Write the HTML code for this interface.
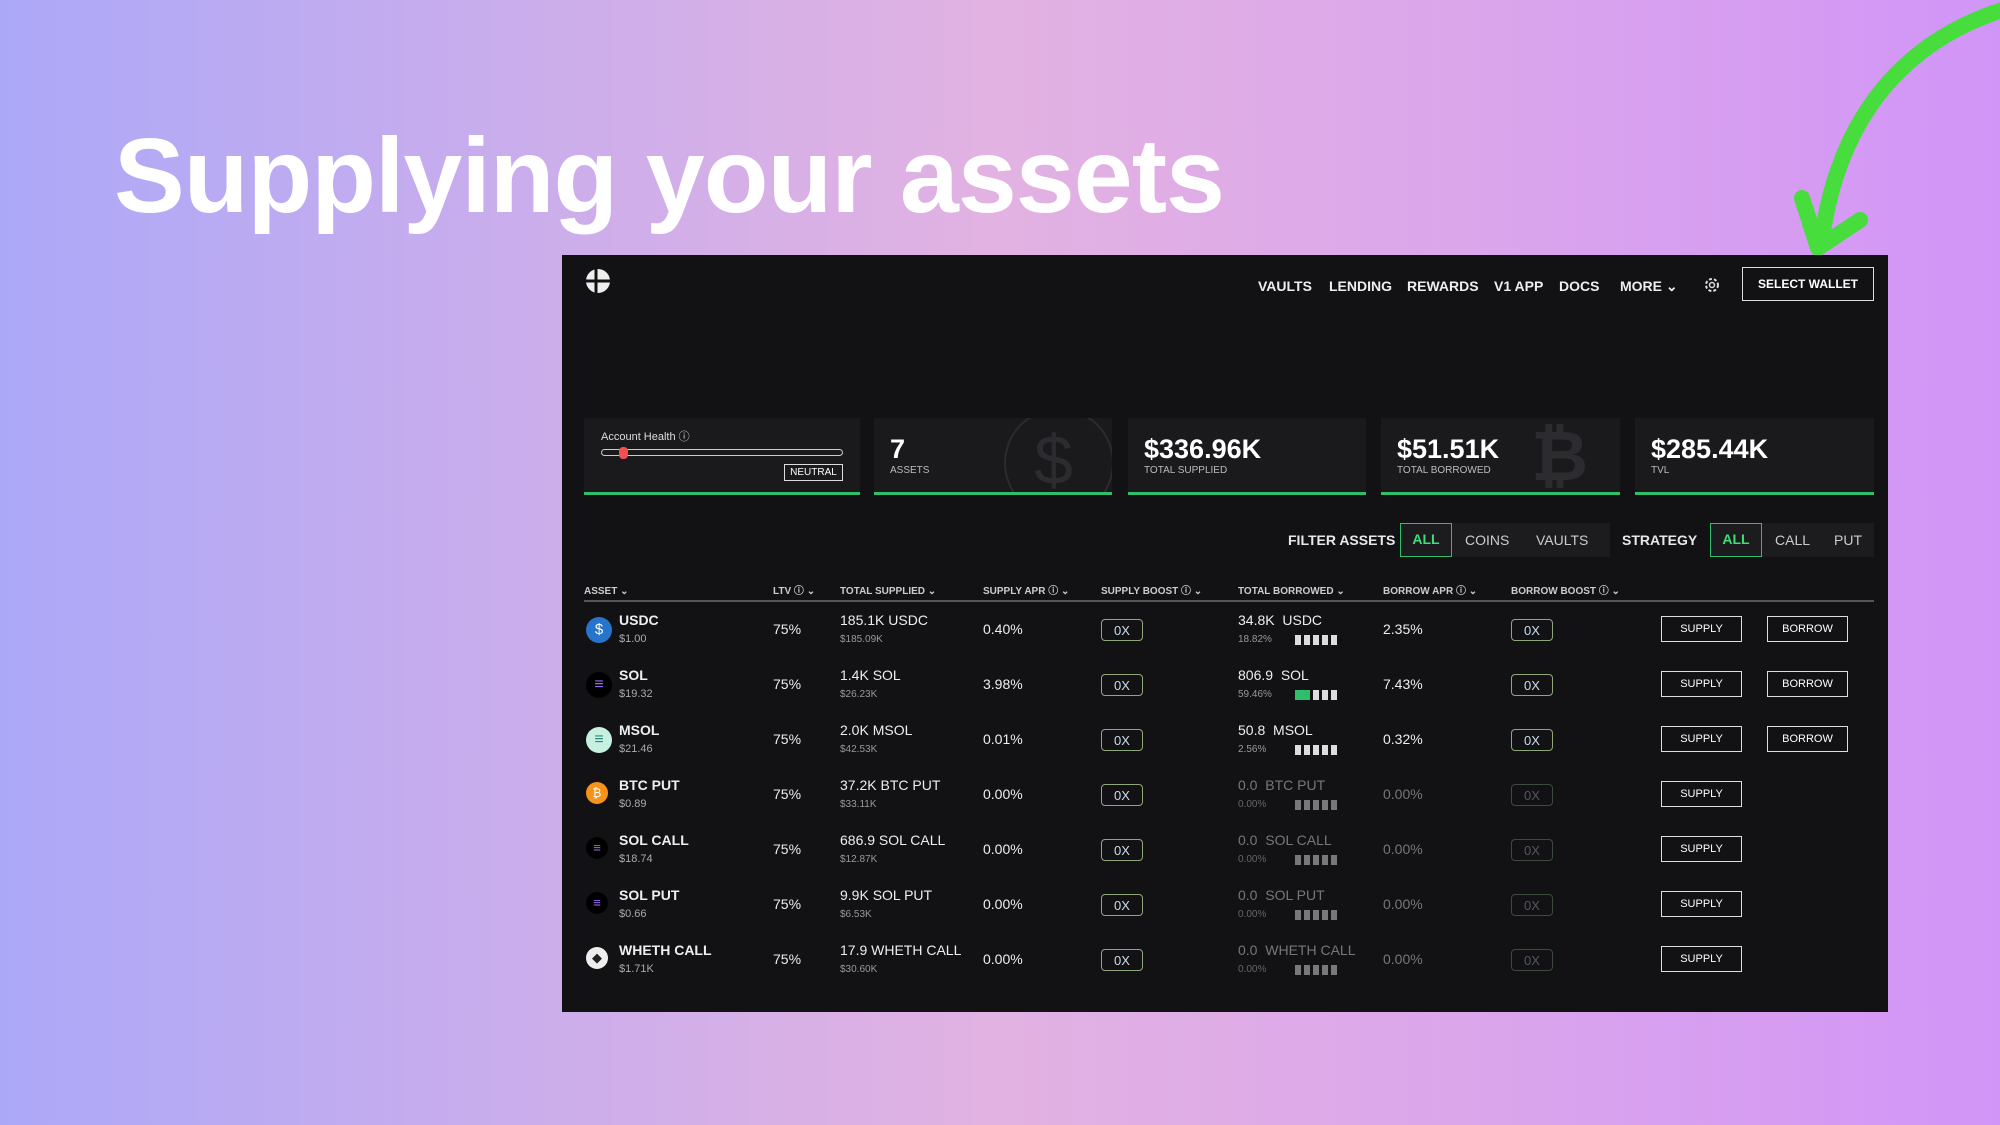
<!DOCTYPE html>
<html><head><meta charset="utf-8"><style>
*{margin:0;padding:0;box-sizing:border-box}
body{width:2000px;height:1125px;overflow:hidden;position:relative;font-family:"Liberation Sans",sans-serif;
background:linear-gradient(90deg,#aca8f8 0%,#c9adec 25%,#e2b2e2 50%,#dba5ec 75%,#d195f7 100%);}
.t{position:absolute;white-space:nowrap}
h1{position:absolute;left:114px;top:116px;font-size:106px;font-weight:bold;color:#fff;letter-spacing:-1px;white-space:nowrap}
#p{position:absolute;left:562px;top:255px;width:1326px;height:757px;background:#121214;color:#e8e8e8}
.nav{font-size:14px;font-weight:bold;top:23px;color:#eee}
.btn{position:absolute;border:1.5px solid #ddd;font-size:11px;color:#fff;display:flex;align-items:center;justify-content:center}
.card{position:absolute;top:163px;height:77px;background:#1a1a1c;border-bottom:3px solid #2fbf6a;overflow:hidden}
.big{position:absolute;left:16px;top:16px;font-size:27px;font-weight:bold;color:#fff}
.lbl{position:absolute;left:16px;top:47px;font-size:10px;color:#bbb}
.hd{font-size:10px;color:#ccc;font-weight:bold;top:331px;line-height:12px;height:12px}
.r{position:absolute;left:0;width:1326px;height:55px}
.r .t{color:#eee}
.nm{left:57px;top:10px;font-size:14px;font-weight:bold}
.pr{left:57px;top:31px;font-size:11px;color:#aaa!important}
.ic{position:absolute;left:24px;top:15px;width:26px;height:26px;border-radius:50%}
.v{font-size:14px;top:19px}
.s1{font-size:14px;top:10px}
.s2{font-size:10px;top:32px;color:#999!important}
.bx{position:absolute;top:17px;width:42px;height:22px;border:1.5px solid #8fa87a;border-radius:4px;font-size:13px;color:#cde;display:flex;align-items:center;justify-content:center}
.dim .bx2{border-color:#3d4a3e;color:#556}
.bars{position:absolute;left:733px;top:33px;width:42px;height:10px;background:repeating-linear-gradient(90deg,#ddd 0 6px,transparent 6px 9px)}
.dim .bo{color:#777!important}
.sb{top:14px;width:81px;height:26px;left:1099px}
.bb{top:14px;width:81px;height:26px;left:1205px}
</style></head><body>
<h1>Supplying your assets</h1>
<svg style="position:absolute;left:1780px;top:0" width="220" height="260"><path d="M222,10 C130,40 60,110 42,238" fill="none" stroke="#47dd3c" stroke-width="16" stroke-linecap="round"/><path d="M22,198 L38,248 L80,220" fill="none" stroke="#47dd3c" stroke-width="16" stroke-linecap="round" stroke-linejoin="round"/></svg>
<div id="p">
<svg style="position:absolute;left:23px;top:13px" width="26" height="26" viewBox="0 0 26 26"><circle cx="13" cy="13" r="12" fill="#eee"/><path d="M1,13H25M11,1V25" stroke="#121214" stroke-width="3"/></svg>
<div class="t nav" style="left:696px">VAULTS</div>
<div class="t nav" style="left:767px">LENDING</div>
<div class="t nav" style="left:845px">REWARDS</div>
<div class="t nav" style="left:932px">V1 APP</div>
<div class="t nav" style="left:997px">DOCS</div>
<div class="t nav" style="left:1058px">MORE ⌄</div>
<svg style="position:absolute;left:1141px;top:21px" width="18" height="18" viewBox="0 0 18 18"><circle cx="9" cy="9" r="6" fill="none" stroke="#ddd" stroke-width="2" stroke-dasharray="3 2"/><circle cx="9" cy="9" r="2.5" fill="none" stroke="#ddd" stroke-width="1.5"/></svg>
<div class="btn" style="left:1180px;top:12px;width:132px;height:34px;font-size:12px;font-weight:bold">SELECT WALLET</div>

<div class="card" style="left:22px;width:276px">
<div class="t" style="left:17px;top:10px;font-size:11px;color:#ddd">Account Health ⓘ</div>
<div style="position:absolute;left:17px;top:31px;width:242px;height:7px;border:1.5px solid #ccc;border-radius:4px"></div>
<div style="position:absolute;left:35px;top:29px;width:9px;height:12px;background:#f05050;border-radius:4px"></div>
<div class="btn" style="left:200px;top:46px;width:59px;height:17px;font-size:10px">NEUTRAL</div>
</div>
<div class="card" style="left:312px;width:238px"><div class="big">7</div><div class="lbl">ASSETS</div><div style="position:absolute;left:130px;top:-10px;width:110px;height:110px;border:2px solid #2c2c30;border-radius:50%"></div><div class="t" style="left:160px;top:2px;font-size:70px;color:#2c2c30">$</div></div>
<div class="card" style="left:566px;width:238px"><div class="big">$336.96K</div><div class="lbl">TOTAL SUPPLIED</div></div>
<div class="card" style="left:819px;width:239px"><div class="big">$51.51K</div><div class="lbl">TOTAL BORROWED</div><div class="t" style="left:150px;top:-2px;font-size:70px;color:#2c2c30;font-weight:bold">₿</div></div>
<div class="card" style="left:1073px;width:239px"><div class="big">$285.44K</div><div class="lbl">TVL</div></div>

<div class="t" style="left:726px;top:277px;font-size:14px;font-weight:bold">FILTER ASSETS</div>
<div style="position:absolute;left:838px;top:268px;width:210px;height:34px;background:#1c1c1f"></div>
<div class="t" style="left:838px;top:268px;width:52px;height:34px;border:1.5px solid #2fbf6a;color:#3fdc7a;font-size:14px;font-weight:bold;text-align:center;line-height:31px">ALL</div>
<div class="t" style="left:903px;top:277px;font-size:14px;color:#ccc">COINS</div>
<div class="t" style="left:974px;top:277px;font-size:14px;color:#ccc">VAULTS</div>
<div class="t" style="left:1060px;top:277px;font-size:14px;font-weight:bold">STRATEGY</div>
<div style="position:absolute;left:1148px;top:268px;width:164px;height:34px;background:#1c1c1f"></div>
<div class="t" style="left:1148px;top:268px;width:52px;height:34px;border:1.5px solid #2fbf6a;color:#3fdc7a;font-size:14px;font-weight:bold;text-align:center;line-height:31px">ALL</div>
<div class="t" style="left:1213px;top:277px;font-size:14px;color:#ccc">CALL</div>
<div class="t" style="left:1272px;top:277px;font-size:14px;color:#ccc">PUT</div>

<div class="t hd" style="left:22px">ASSET ⌄</div>
<div class="t hd" style="left:211px">LTV ⓘ ⌄</div>
<div class="t hd" style="left:278px">TOTAL SUPPLIED ⌄</div>
<div class="t hd" style="left:421px">SUPPLY APR ⓘ ⌄</div>
<div class="t hd" style="left:539px">SUPPLY BOOST ⓘ ⌄</div>
<div class="t hd" style="left:676px">TOTAL BORROWED ⌄</div>
<div class="t hd" style="left:821px">BORROW APR ⓘ ⌄</div>
<div class="t hd" style="left:949px">BORROW BOOST ⓘ ⌄</div>
<div style="position:absolute;left:22px;top:345px;width:1290px;height:2px;background:#555"></div>

<div class="r" style="top:347px"><div class="ic" style="background:#2775ca;color:#fff;font-size:15px;text-align:center;line-height:26px">$</div><div class="t nm">USDC</div><div class="t pr">$1.00</div><div class="t v" style="left:211px">75%</div><div class="t s1" style="left:278px">185.1K USDC</div><div class="t s2" style="left:278px">$185.09K</div><div class="t v" style="left:421px">0.40%</div><div class="bx" style="left:539px">0X</div><div class="t s1" style="left:676px">34.8K &nbsp;USDC</div><div class="t s2" style="left:676px">18.82%</div><div class="bars"></div><div class="t v" style="left:821px">2.35%</div><div class="bx bx2" style="left:949px">0X</div><div class="btn sb">SUPPLY</div><div class="btn bb">BORROW</div></div>
<div class="r" style="top:402px"><div class="ic" style="background:#000;color:#9b6cf0;font-size:16px;text-align:center;line-height:26px">≡</div><div class="t nm">SOL</div><div class="t pr">$19.32</div><div class="t v" style="left:211px">75%</div><div class="t s1" style="left:278px">1.4K SOL</div><div class="t s2" style="left:278px">$26.23K</div><div class="t v" style="left:421px">3.98%</div><div class="bx" style="left:539px">0X</div><div class="t s1" style="left:676px">806.9 &nbsp;SOL</div><div class="t s2" style="left:676px">59.46%</div><div class="bars" style="background:linear-gradient(90deg,#2fbf6a 0 15px,transparent 15px),repeating-linear-gradient(90deg,#ddd 0 6px,transparent 6px 9px)"></div><div class="t v" style="left:821px">7.43%</div><div class="bx bx2" style="left:949px">0X</div><div class="btn sb">SUPPLY</div><div class="btn bb">BORROW</div></div>
<div class="r" style="top:457px"><div class="ic" style="background:#c7f0e0;color:#2a8a7a;font-size:16px;text-align:center;line-height:26px">≡</div><div class="t nm">MSOL</div><div class="t pr">$21.46</div><div class="t v" style="left:211px">75%</div><div class="t s1" style="left:278px">2.0K MSOL</div><div class="t s2" style="left:278px">$42.53K</div><div class="t v" style="left:421px">0.01%</div><div class="bx" style="left:539px">0X</div><div class="t s1" style="left:676px">50.8 &nbsp;MSOL</div><div class="t s2" style="left:676px">2.56%</div><div class="bars"></div><div class="t v" style="left:821px">0.32%</div><div class="bx bx2" style="left:949px">0X</div><div class="btn sb">SUPPLY</div><div class="btn bb">BORROW</div></div>
<div class="r dim" style="top:512px"><div class="ic" style="background:#f7931a;width:22px;height:22px;color:#fff;font-size:12px;text-align:center;line-height:22px">₿</div><div class="t nm">BTC PUT</div><div class="t pr">$0.89</div><div class="t v" style="left:211px">75%</div><div class="t s1" style="left:278px">37.2K BTC PUT</div><div class="t s2" style="left:278px">$33.11K</div><div class="t v" style="left:421px">0.00%</div><div class="bx" style="left:539px">0X</div><div class="t s1 bo" style="left:676px">0.0 &nbsp;BTC PUT</div><div class="t s2" style="left:676px;color:#666!important">0.00%</div><div class="bars" style="opacity:.5"></div><div class="t v bo" style="left:821px">0.00%</div><div class="bx bx2" style="left:949px">0X</div><div class="btn sb">SUPPLY</div></div>
<div class="r dim" style="top:567px"><div class="ic" style="background:#000;width:22px;height:22px;color:#9b6cf0;font-size:13px;text-align:center;line-height:22px">≡</div><div class="t nm">SOL CALL</div><div class="t pr">$18.74</div><div class="t v" style="left:211px">75%</div><div class="t s1" style="left:278px">686.9 SOL CALL</div><div class="t s2" style="left:278px">$12.87K</div><div class="t v" style="left:421px">0.00%</div><div class="bx" style="left:539px">0X</div><div class="t s1 bo" style="left:676px">0.0 &nbsp;SOL CALL</div><div class="t s2" style="left:676px;color:#666!important">0.00%</div><div class="bars" style="opacity:.5"></div><div class="t v bo" style="left:821px">0.00%</div><div class="bx bx2" style="left:949px">0X</div><div class="btn sb">SUPPLY</div></div>
<div class="r dim" style="top:622px"><div class="ic" style="background:#000;width:22px;height:22px;color:#9b6cf0;font-size:13px;text-align:center;line-height:22px">≡</div><div class="t nm">SOL PUT</div><div class="t pr">$0.66</div><div class="t v" style="left:211px">75%</div><div class="t s1" style="left:278px">9.9K SOL PUT</div><div class="t s2" style="left:278px">$6.53K</div><div class="t v" style="left:421px">0.00%</div><div class="bx" style="left:539px">0X</div><div class="t s1 bo" style="left:676px">0.0 &nbsp;SOL PUT</div><div class="t s2" style="left:676px;color:#666!important">0.00%</div><div class="bars" style="opacity:.5"></div><div class="t v bo" style="left:821px">0.00%</div><div class="bx bx2" style="left:949px">0X</div><div class="btn sb">SUPPLY</div></div>
<div class="r dim" style="top:677px"><div class="ic" style="background:#eee;width:22px;height:22px;color:#222;font-size:13px;text-align:center;line-height:22px">◆</div><div class="t nm">WHETH CALL</div><div class="t pr">$1.71K</div><div class="t v" style="left:211px">75%</div><div class="t s1" style="left:278px">17.9 WHETH CALL</div><div class="t s2" style="left:278px">$30.60K</div><div class="t v" style="left:421px">0.00%</div><div class="bx" style="left:539px">0X</div><div class="t s1 bo" style="left:676px">0.0 &nbsp;WHETH CALL</div><div class="t s2" style="left:676px;color:#666!important">0.00%</div><div class="bars" style="opacity:.5"></div><div class="t v bo" style="left:821px">0.00%</div><div class="bx bx2" style="left:949px">0X</div><div class="btn sb">SUPPLY</div></div>
</div>
</body></html>
